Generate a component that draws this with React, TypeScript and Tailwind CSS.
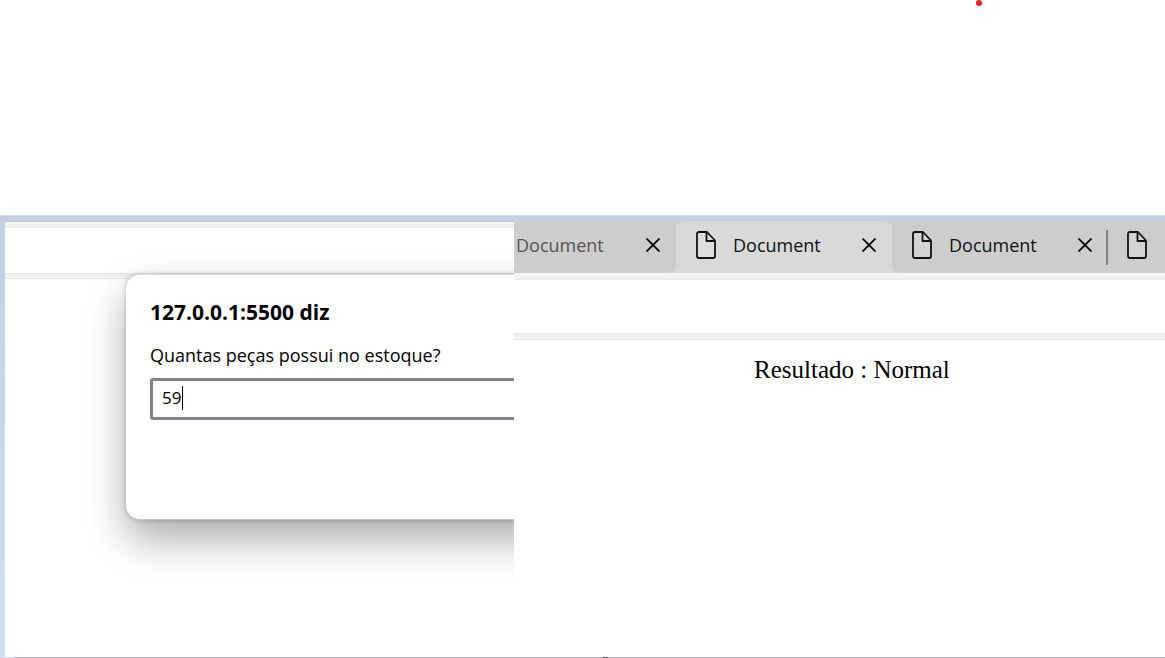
import React from "react";

function PageIcon() {
  return (
    <svg width="20" height="28" viewBox="0 0 20 28" fill="none" stroke="#111" strokeWidth="1.800" strokeLinejoin="round" className="shrink-0" aria-hidden="true">
      <path d="M3 1H11L19 9.500V25Q19 27 17 27H3Q1 27 1 25V3Q1 1 3 1Z" fill="#fff" fillOpacity="0.12" />
      <path d="M10.500 1V10H19" />
    </svg>
  );
}

function CloseIcon() {
  return (
    <svg width="14" height="14" viewBox="0 0 14 14" stroke="#000" strokeWidth="1.800" aria-hidden="true">
      <path d="M0.500 0.500L13.500 13.500M13.500 0.500L0.500 13.500" />
    </svg>
  );
}

function Tab({ className, faded, icon = true }: { className: string; faded?: boolean; icon?: boolean }) {
  return (
    <div className={`relative flex shrink-0 items-center pr-4 pb-1 ${className}`}>
      {icon && (
        <span className="mr-[17px] flex">
          <PageIcon />
        </span>
      )}
      <a href="#" className={`text-[18px] leading-6 ${faded ? "text-[#555]" : "text-[#111]"}`}>
        Document
      </a>
      <button type="button" aria-label="Fechar guia" className="ml-auto">
        <CloseIcon />
      </button>
    </div>
  );
}

function PromptPane() {
  return (
    <section className="relative flex w-[509px] shrink-0 flex-col overflow-hidden border-t border-[#c6c9cf] bg-white">
      <div className="h-[6px] bg-linear-to-b from-[#f7f7f7] to-[#ececec]" />
      <div className="h-[45px] bg-white" />
      <div className="h-[6px] border-b border-[#e5e5e5] bg-linear-to-b from-[#eaeaea] to-[#f7f7f7]" />
      <form
        role="dialog"
        aria-labelledby="prompt-title"
        className="absolute top-[52px] left-[121px] flex h-[246px] w-[680px] flex-col rounded-[14px] border-t border-b border-t-[#dcdcdc] border-b-[#c4c4c4] bg-white px-6 pt-[23px] shadow-[0_0_5px_rgba(0,0,0,0.22),0_20px_40px_rgba(0,0,0,0.32)]"
      >
        <h1 id="prompt-title" className="text-[21px] leading-7 font-bold text-black">
          127.0.0.1:5500 diz
        </h1>
        <label htmlFor="stock" className="mt-[17px] text-[18px] leading-6 text-black">
          Quantas peças possui no estoque?
        </label>
        <div className="relative mt-[11px]">
          <input
            id="stock"
            type="text"
            defaultValue="59"
            className="block h-[42px] w-full rounded-[3px] border-3 border-[#80848a] bg-white px-[9px] pb-[3px] text-[17px] text-black outline-none"
          />
          <span className="absolute top-2 left-8 h-6 w-px bg-black" />
        </div>
      </form>
    </section>
  );
}

function ResultPane() {
  return (
    <section className="flex min-w-0 flex-1 flex-col overflow-hidden bg-white">
      <nav aria-label="Guias" className="flex h-[52px] items-stretch overflow-hidden bg-[#cdcdcd]">
        <Tab className="w-[162px] pl-[2px]" faded icon={false} />
        <Tab
          className="w-[216px] rounded-t-lg bg-[#d9d9d9] pl-5 before:absolute before:bottom-0 before:-left-2 before:size-2 before:bg-[radial-gradient(circle_at_0_0,transparent_8px,#d9d9d9_8px)] after:absolute after:-right-2 after:bottom-0 after:size-2 after:bg-[radial-gradient(circle_at_100%_0,transparent_8px,#d9d9d9_8px)]"
        />
        <Tab className="w-[216px] pl-5" />
        <span className="-ml-[2px] h-[35px] w-[2px] shrink-0 self-center bg-[#808080]" />
        <a href="#" aria-label="Guia" className="flex shrink-0 items-center pb-1 pl-[19px]">
          <PageIcon />
        </a>
      </nav>
      <div className="h-[7px] bg-linear-to-b from-[#f5f5f5] to-[#ececec]" />
      <div className="h-[53px] bg-white" />
      <div className="h-[7px] border-b border-[#e5e5e5] bg-linear-to-b from-[#ececec] to-[#f7f7f7]" />
      <p className="pt-[15px] pl-60 font-['Liberation_Serif',serif] text-[25px] leading-[30px] text-black">
        Resultado : Normal
      </p>
    </section>
  );
}

export default function App() {
  return (
    <main className="flex min-h-screen flex-col bg-white font-['Open_Sans',sans-serif]">
      <header className="flex h-[215px] justify-center">
        <span className="ml-[793px] size-[6px] shrink-0 rounded-full bg-[#e81e25]" />
      </header>
      <div className="flex flex-1 flex-col border-t border-[#dadada] bg-linear-to-b from-[#c4cfe2] to-[#d3deec] pl-[5px]">
        <div className="h-[5px]" />
        <div className="flex flex-1">
          <PromptPane />
          <ResultPane />
        </div>
      </div>
      <footer className="flex h-px bg-[#b0b5c4]">
        <span className="w-[14px] bg-[#d3deec]" />
        <span className="ml-[589px] w-[5px] bg-[#555]" />
      </footer>
    </main>
  );
}
